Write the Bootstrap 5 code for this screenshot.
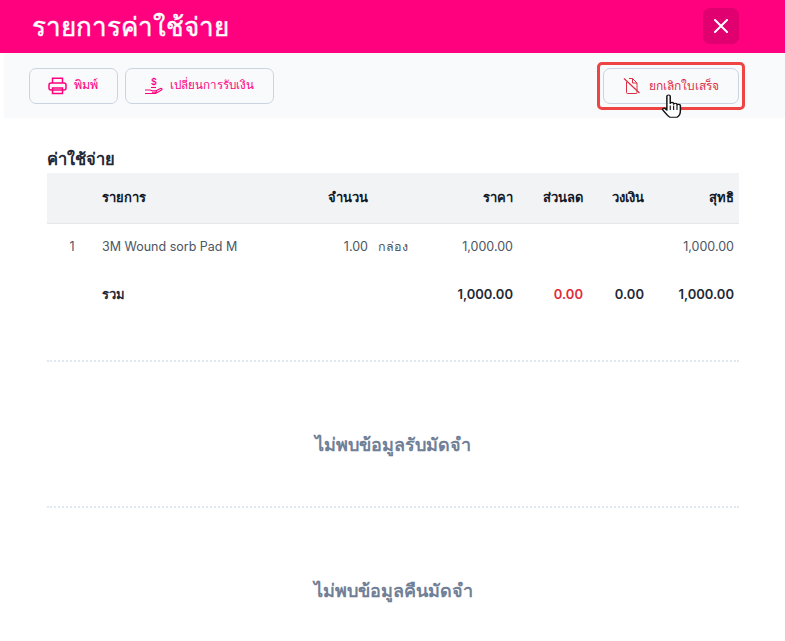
<!DOCTYPE html>
<html lang="th"><head><meta charset="utf-8">
<link href="https://cdn.jsdelivr.net/npm/bootstrap@5.3.0/dist/css/bootstrap.min.css" rel="stylesheet">
<script src="https://cdn.jsdelivr.net/npm/bootstrap@5.3.0/dist/js/bootstrap.bundle.min.js"></script>
<style>
html,body{height:641px;overflow:hidden;background:#fff}
body{font-family:"Inter","Noto Sans","Liberation Sans",sans-serif;color:#1f2937;font-size:13px}
.hdbar{height:53px;background:#ff007f;padding:0 46px 0 32px}
.hdtitle{font-size:26px;line-height:1;font-weight:400;-webkit-text-stroke:.45px #fff;color:#fff;margin:0}
.closebox{width:36px;height:36px;background:#e0006f;border-radius:7px;border:0;padding:0;margin-top:-1px}
.tool{background:#f8fafc;margin-left:4px;height:65px;padding:0 46px 0 25px}
.leftbtns{gap:7px}
.toolbtn{height:36px;background:transparent;border:1px solid #cbd5e1;border-radius:7px;font-size:12.5px;font-weight:500;color:#ff007f;padding:0 18px;gap:7px}
.toolbtn.wide{font-size:11.6px;padding-right:19px}
.toolbtn.narrow{padding-right:19px}
.toolbtn.danger{color:#dc2f45;width:136px;justify-content:center;gap:8px;padding:0;font-size:12px;position:relative}
.redring{position:absolute;inset:-7px;border:3px solid #ef4444;border-radius:5px;pointer-events:none}
.ptr{position:absolute;left:659px;top:94px;width:27px;height:25px}
.sect{padding:30px 46px 0 47px}
.secttitle{font-size:16.5px;font-weight:600;color:#1f2937;line-height:23px;margin-bottom:2px}
.tbl{width:100%;table-layout:fixed;border-collapse:collapse;font-size:12.5px}
.tbl th{background:#f2f3f5;height:50px;font-weight:700;font-size:13px;color:#111827;border-bottom:1px solid #e5e7eb;padding:0 5px}
.tbl td{height:49px;padding:0 5px;color:#4b5563}
.tbl .sumrow td{height:47px;font-weight:600;color:#1f2937;padding-bottom:1px;font-size:13px}
.tbl .sumrow td.neg{color:#e02d3c}
.c1{width:50px}.c2{width:201px}.c3{width:75px}.c4{width:60px}.c5{width:85px}.c6{width:70px}.c7{width:61px}.c8{width:90px}
.dash{border-top:2px dotted #e2e8f0;margin:0}
.nodata{font-size:18px;font-weight:600;color:#718096;text-align:center;line-height:24px}
.gap1{height:41px}.pad2{padding:71px 0 49px}
</style></head><body>
<div class="hdbar d-flex align-items-center justify-content-between">
  <h1 class="hdtitle">รายการค่าใช้จ่าย</h1>
  <button class="closebox d-flex align-items-center justify-content-center" aria-label="close">
    <svg width="14" height="14" viewBox="0 0 14 14"><path d="M1 1 13 13M13 1 1 13" stroke="#fff" stroke-width="2" stroke-linecap="round"/></svg>
  </button>
</div>
<div class="tool d-flex align-items-center justify-content-between">
  <div class="d-flex leftbtns">
    <button class="toolbtn narrow d-flex align-items-center">
      <svg width="19" height="18" viewBox="0 0 19 18" fill="none" stroke="#ff007f" stroke-width="1.500"><path d="M4.500 6V1.200h10V6"/><rect x="1" y="6" width="17" height="7" rx="2"/><path d="M4.500 11h10v5.500h-10z"/></svg>
      พิมพ์
    </button>
    <button class="toolbtn wide d-flex align-items-center">
      <svg width="19" height="20" viewBox="0 0 19 20" fill="none" stroke="#ff007f" stroke-width="1.100"><path d="M1 14h5l2 .8h3.500c1.200 0 1.200 1.500 0 1.500H8M11.500 15l5-2.500c1.500-.5 2 1 1 1.500l-6 3.500H1"/><path d="M7 11.500h5"/><text x="7" y="9" font-size="9" font-weight="600" fill="#ff007f" stroke="none">$</text></svg>
      เปลี่ยนการรับเงิน
    </button>
  </div>
  <button class="toolbtn danger d-flex align-items-center">
    <span class="redring"></span>
    <svg width="18" height="18" viewBox="0 0 18 18" fill="none" stroke="#dc2f45" stroke-width="1"><path d="M3.500 5v10.500a1 1 0 0 0 1 1h8.500a1 1 0 0 0 1-1V6l-4.500-4.500H6"/><path d="M9.500 1.500V6H14"/><path d="M1 1.500 16.500 16" stroke-width="1.200"/></svg>
    ยกเลิกใบเสร็จ
  </button>
</div>
<svg class="ptr" viewBox="0 0 24 28" preserveAspectRatio="none"><path d="M7 2.500c0-1.800 3-1.800 3 0v8c0-1.500 3-1.500 3 0v1c0-1.500 3-1.500 3 0v1c0-1.300 3-1.300 3 .5v6c0 3-1.500 6-3 7H9.500c-1.500-1.500-4-5-6-8-1-1.500 1-3 2-1.500L7 18z" fill="#fff" stroke="#111" stroke-width="1.300" stroke-linejoin="round"/><path d="M10 13v5M13 13v5M16 13v5" stroke="#111" stroke-width="1"/></svg>
<main class="sect">
  <div class="secttitle">ค่าใช้จ่าย</div>
  <table class="tbl">
    <colgroup><col class="c1"><col class="c2"><col class="c3"><col class="c4"><col class="c5"><col class="c6"><col class="c7"><col class="c8"></colgroup>
    <thead><tr><th></th><th>รายการ</th><th class="text-end">จำนวน</th><th></th><th class="text-end">ราคา</th><th class="text-end">ส่วนลด</th><th class="text-end">วงเงิน</th><th class="text-end">สุทธิ</th></tr></thead>
    <tbody>
      <tr><td class="text-center">1</td><td>3M Wound sorb Pad M</td><td class="text-end">1.00</td><td>กล่อง</td><td class="text-end">1,000.00</td><td></td><td></td><td class="text-end">1,000.00</td></tr>
      <tr class="sumrow"><td></td><td>รวม</td><td></td><td></td><td class="text-end">1,000.00</td><td class="text-end neg">0.00</td><td class="text-end">0.00</td><td class="text-end">1,000.00</td></tr>
    </tbody>
  </table>
  <div class="gap1"></div>
  <hr class="dash opacity-100">
  <div class="nodata pad2">ไม่พบข้อมูลรับมัดจำ</div>
  <hr class="dash opacity-100">
  <div class="nodata pad2">ไม่พบข้อมูลคืนมัดจำ</div>
</main>
</body></html>
